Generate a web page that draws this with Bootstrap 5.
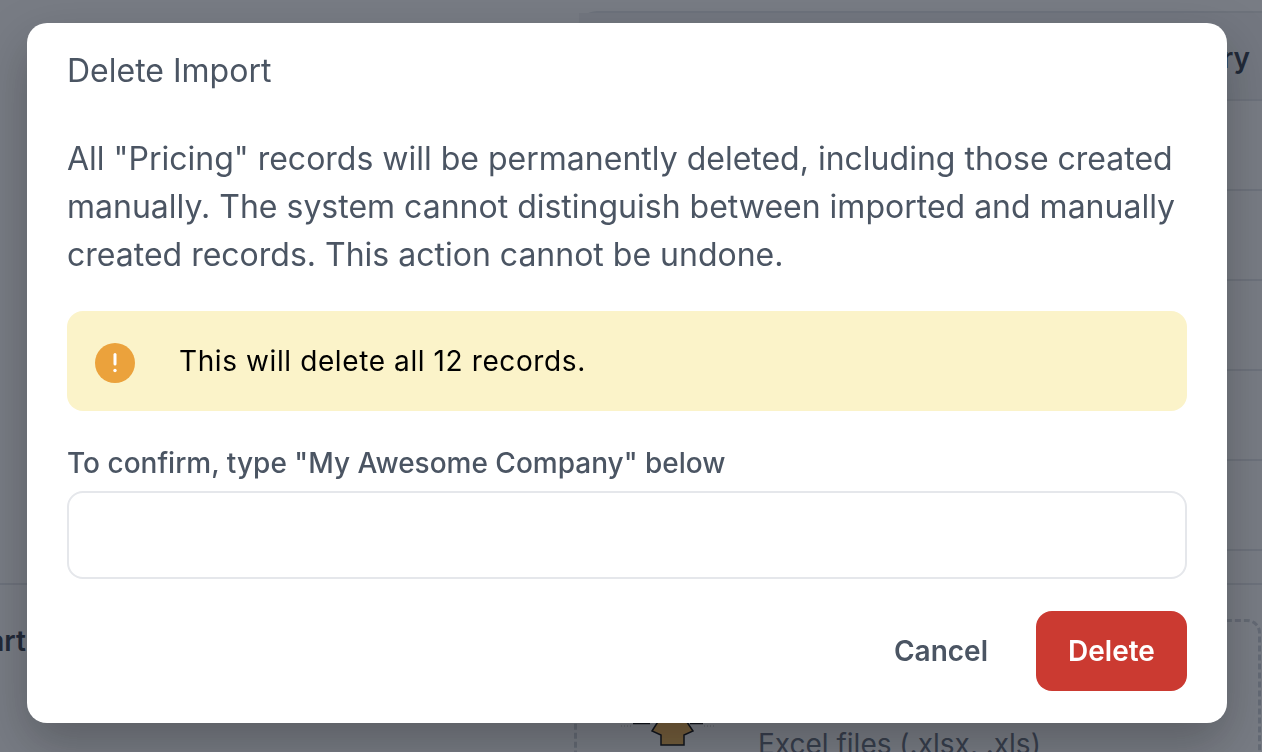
<!DOCTYPE html>
<html lang="en">
<head>
    <meta charset="UTF-8">
    <meta name="viewport" content="width=device-width, initial-scale=1.0">
    <title>Delete Import</title>
    <link href="https://cdn.jsdelivr.net/npm/bootstrap@5.3.0/dist/css/bootstrap.min.css" rel="stylesheet">
    <style>
        html, body { height: 100%; overflow: hidden; }
        body { font-family: Inter, "Liberation Sans", sans-serif; color: #4b5563; background: #fff; }
        .modal-backdrop { --bs-backdrop-bg: #111827; --bs-backdrop-opacity: .57; }

        /* page behind the dialog */
        .page-wrap { height: 752px; padding-top: 11px; overflow: hidden; }
        .top-row { height: 574px; padding-left: 577px; border-bottom: 2px solid #e5e7eb; }
        .import-table { border: 2px solid #e5e7eb; border-width: 2px 0 0 2px; border-radius: 20px 0 0 0; }
        .table-head { height: 88px; background: #f3f4f6; font-size: 28px; font-weight: 600; line-height: 90px; text-align: right; padding-right: 12px; color: #374151; border-bottom: 2px solid #e5e7eb; }
        .table-line { height: 90px; border-bottom: 2px solid #e5e7eb; }
        .left-col { width: 574px; flex: none; padding-top: 38px; }
        .left-title { margin-left: -40px; font-size: 28px; font-weight: 600; line-height: 36px; color: #374151; }
        .drop-zone { flex: 1; margin-top: 34px; height: 200px; border: 3px dashed #d1d5db; border-radius: 14px; padding-left: 43px; padding-top: 78px; gap: 38px; margin-right: 1px; }
        .drop-arrow { width: 100px; height: 50px; flex: none; }
        .drop-text { font-size: 28px; line-height: 36px; margin-top: 26px; color: #6b7280; }

        /* dialog */
        .modal-dialog.delete-dialog { max-width: 1200px; width: 1200px; margin: 23px 0 0 27px; }
        .delete-box { height: 700px; border: 0; border-radius: 20px; box-shadow: 0 20px 50px rgba(0, 0, 0, .25); padding: 0 40px; color: #4b5563; }
        .delete-title { font-size: 32px; line-height: 40px; font-weight: 400; margin: 28px 0 0; color: #4b5563; }
        .delete-text { font-size: 32px; line-height: 48px; margin: 44px 0 0; }
        .warn-box { height: 100px; margin-top: 32px; background: #fbf3c9; border-radius: 16px; padding-left: 28px; gap: 44px; color: #000; font-size: 28px; letter-spacing: .6px; }
        .warn-icon { width: 40px; height: 40px; flex: none; margin-top: 4px; }
        .confirm-label { font-size: 28px; font-weight: 500; line-height: 36px; margin: 34px 0 10px; color: #4b5563; }
        .confirm-input.form-control { height: 88px; border: 2px solid #e5e7eb; border-radius: 16px; }
        .action-row { margin-top: 32px; gap: 48px; }
        .btn-cancel.btn { border: 0; padding: 0; font-size: 28px; font-weight: 600; color: #4b5563; }
        .btn-delete.btn { width: 151px; height: 80px; border: 0; border-radius: 16px; padding: 0; font-size: 28px; font-weight: 600; color: #fff; background: #cb3a31; }
    </style>
</head>
<body>
    <!-- Page behind the dialog -->
    <div class="page-wrap">
        <div class="top-row">
            <div class="import-table">
                <div class="table-head">Summary</div>
                <div class="table-line"></div>
                <div class="table-line"></div>
                <div class="table-line"></div>
                <div class="table-line"></div>
                <div class="table-line"></div>
            </div>
        </div>
        <div class="d-flex">
            <div class="left-col">
                <div class="left-title">Start</div>
            </div>
            <div class="drop-zone d-flex">
                <svg class="drop-arrow" viewBox="0 0 100 50">
                    <path d="M13 23H30M70 23H83" stroke="#111" stroke-width="2.5" fill="none"/>
                    <path d="M1 26H11M84 26H96" stroke="#bbb" stroke-width="1" stroke-dasharray="1 2" fill="none"/>
                    <path d="M52 0 73 31 64 35V45H41V35L32 31Z" fill="#f5b858" stroke="#111" stroke-width="1.5"/>
                </svg>
                <div class="drop-text">Excel files (.xlsx, .xls)</div>
            </div>
        </div>
    </div>

    <div class="modal-backdrop show"></div>

    <!-- Delete dialog -->
    <div class="modal d-block" tabindex="-1">
        <div class="modal-dialog delete-dialog">
            <div class="modal-content delete-box">
                <h5 class="delete-title">Delete Import</h5>
                <p class="delete-text">All "Pricing" records will be permanently deleted, including those created manually. The system cannot distinguish between imported and manually created records. This action cannot be undone.</p>
                <div class="warn-box d-flex align-items-center">
                    <svg class="warn-icon" viewBox="0 0 40 40">
                        <circle cx="20" cy="20" r="20" fill="#eba23c"/>
                        <rect x="18.5" y="10" width="3" height="12.5" rx="1.5" fill="#fff"/>
                        <circle cx="20" cy="27.5" r="1.7" fill="#fff"/>
                    </svg>
                    <span>This will delete all 12 records.</span>
                </div>
                <label for="confirmName" class="confirm-label d-block">To confirm, type "My Awesome Company" below</label>
                <input type="text" class="form-control confirm-input" id="confirmName">
                <div class="action-row d-flex justify-content-end align-items-center">
                    <button type="button" class="btn btn-cancel">Cancel</button>
                    <button type="button" class="btn btn-delete">Delete</button>
                </div>
            </div>
        </div>
    </div>

    <script src="https://cdn.jsdelivr.net/npm/bootstrap@5.3.0/dist/js/bootstrap.bundle.min.js"></script>
</body>
</html>
